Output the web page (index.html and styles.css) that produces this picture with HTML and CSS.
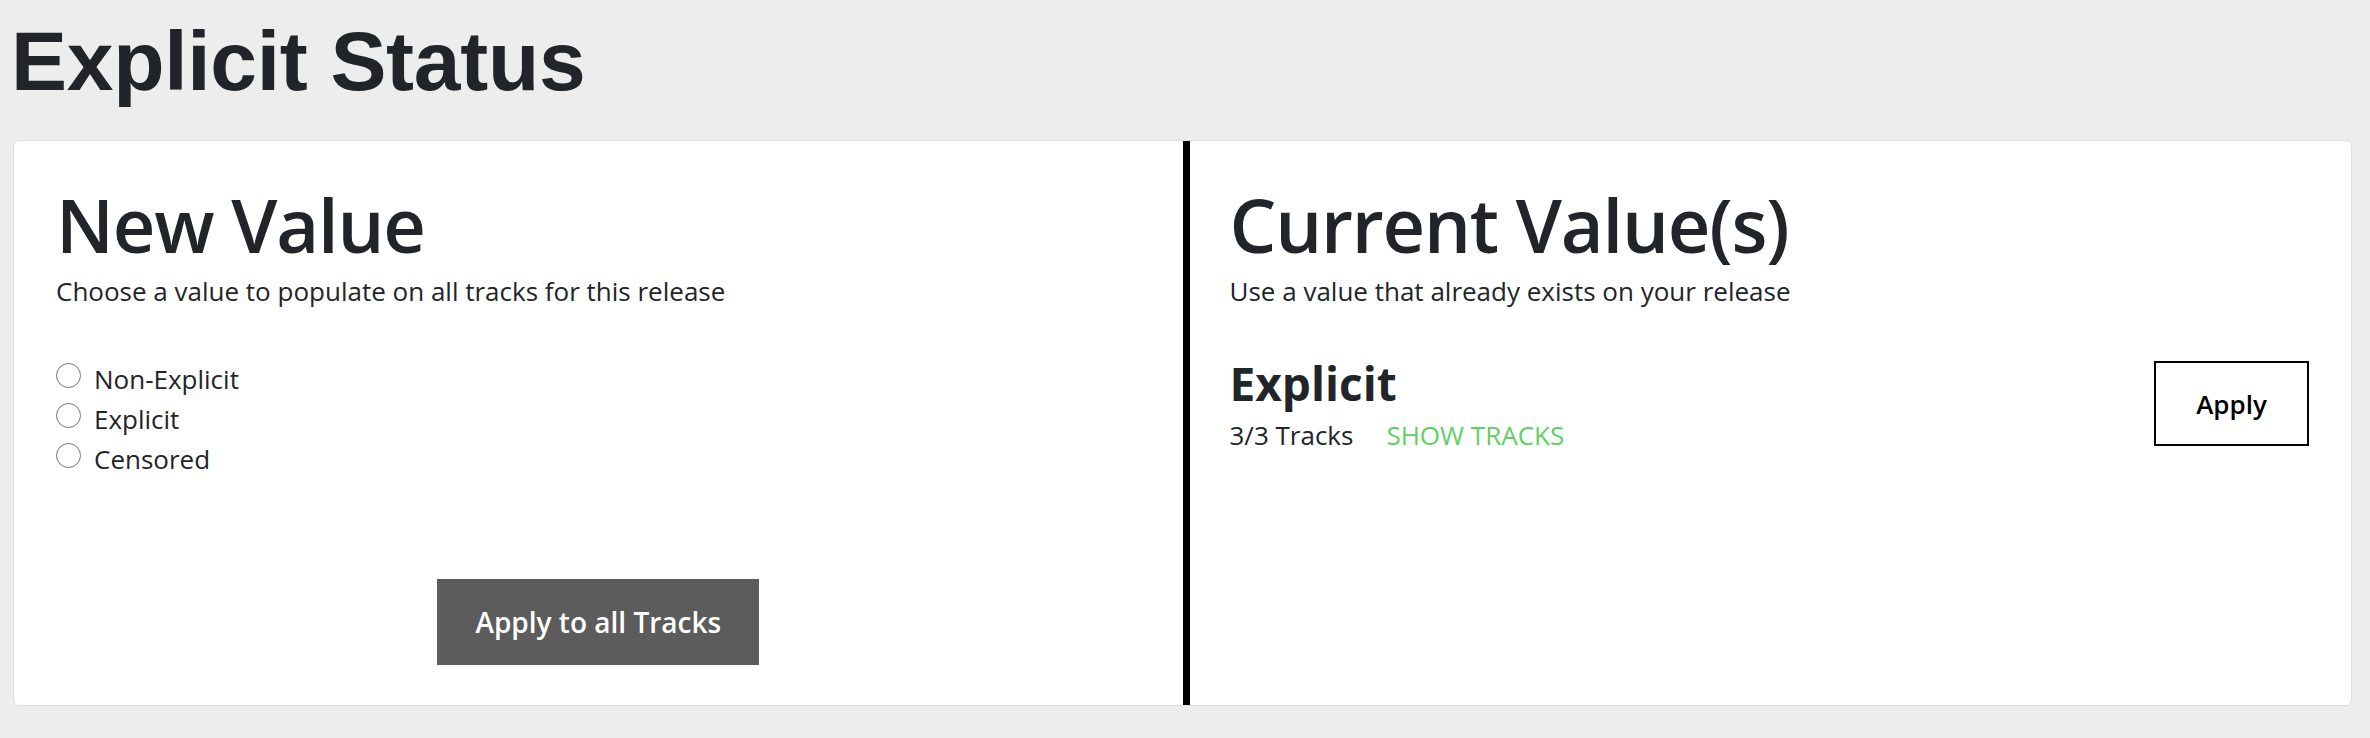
FILE: index.html
```html
<!DOCTYPE html>
<html lang="en">
<head>
    <meta charset="UTF-8">
    <meta name="viewport" content="width=device-width, initial-scale=1.0">
    <title>Explicit Status</title>
    <link rel="stylesheet" href="styles.css">
</head>
<body>

<h1 class="page-title">Explicit Status</h1>

<div class="card">
    <section class="panel panel-new">
        <h2>New Value</h2>
        <p class="hint">Choose a value to populate on all tracks for this release</p>

        <div class="options">
            <label class="option"><input type="radio" name="explicit" value="non-explicit"> Non-Explicit</label>
            <label class="option"><input type="radio" name="explicit" value="explicit"> Explicit</label>
            <label class="option"><input type="radio" name="explicit" value="censored"> Censored</label>
        </div>

        <div class="actions">
            <button class="btn-dark">Apply to all Tracks</button>
        </div>
    </section>

    <section class="panel panel-current">
        <h2>Current Value(s)</h2>
        <p class="hint">Use a value that already exists on your release</p>

        <div class="value-row">
            <div class="value-info">
                <div class="value-name">Explicit</div>
                <div class="value-meta">
                    <span>3/3 Tracks</span>
                    <a href="#" class="show-tracks">SHOW TRACKS</a>
                </div>
            </div>
            <button class="btn-outline">Apply</button>
        </div>
    </section>
</div>

</body>
</html>
```

FILE: styles.css
```css
body {
    margin: 0;
    padding: 0 18px 0 13px;
    background-color: #ededed;
    color: #212529;
    font-family: "Open Sans", sans-serif;
}

.page-title {
    font-family: "Liberation Sans", Arial, sans-serif;
    font-size: 84px;
    font-weight: bold;
    line-height: 1.2;
    letter-spacing: -0.3px;
    margin: 11px 0 28px -2px;
}

.card {
    display: grid;
    grid-template-columns: 1fr 1fr;
    background-color: #fff;
    border: 1px solid #dedede;
    border-radius: 6px;
}

.panel {
    min-width: 0;
    padding: 40px 42px;
}

.panel-new {
    display: flex;
    flex-direction: column;
}

.panel-current {
    padding-left: 40px;
    border-left: 7px solid #000;
}

h2 {
    font-size: 74px;
    font-weight: 600;
    line-height: 1.2;
    letter-spacing: -1.2px;
    margin: 0;
}

.hint {
    font-size: 26px;
    line-height: 1.5;
    margin: 2px 0 0;
}

.options {
    margin-top: 48px;
}

.option {
    display: flex;
    align-items: flex-start;
    gap: 13px;
    height: 40px;
    font-size: 26px;
    line-height: 40px;
}

.option input {
    appearance: none;
    width: 25px;
    height: 25px;
    margin: 4px 0 0;
    border: 1.5px solid #767676;
    border-radius: 50%;
    background-color: #fff;
}

.actions {
    margin-top: 100px;
    text-align: center;
}

.btn-dark {
    height: 86px;
    padding: 0 38px;
    font-family: "Open Sans", sans-serif;
    font-size: 28px;
    font-weight: 600;
    background-color: #5c5c5c;
    color: #fff;
    border: none;
    cursor: pointer;
}

.value-row {
    display: flex;
    align-items: center;
    justify-content: space-between;
    margin-top: 45px;
}

.value-name {
    font-size: 46px;
    font-weight: bold;
    line-height: 1.2;
}

.value-meta {
    display: flex;
    gap: 33px;
    margin-top: 5px;
    font-size: 26px;
    line-height: 1.5;
}

.show-tracks {
    color: #5fd063;
    text-decoration: none;
}

.btn-outline {
    width: 155px;
    height: 85px;
    margin-top: -3px;
    font-family: "Open Sans", sans-serif;
    font-size: 26px;
    font-weight: 600;
    background-color: #fff;
    color: #000;
    border: 2.5px solid #000;
    cursor: pointer;
}
```
